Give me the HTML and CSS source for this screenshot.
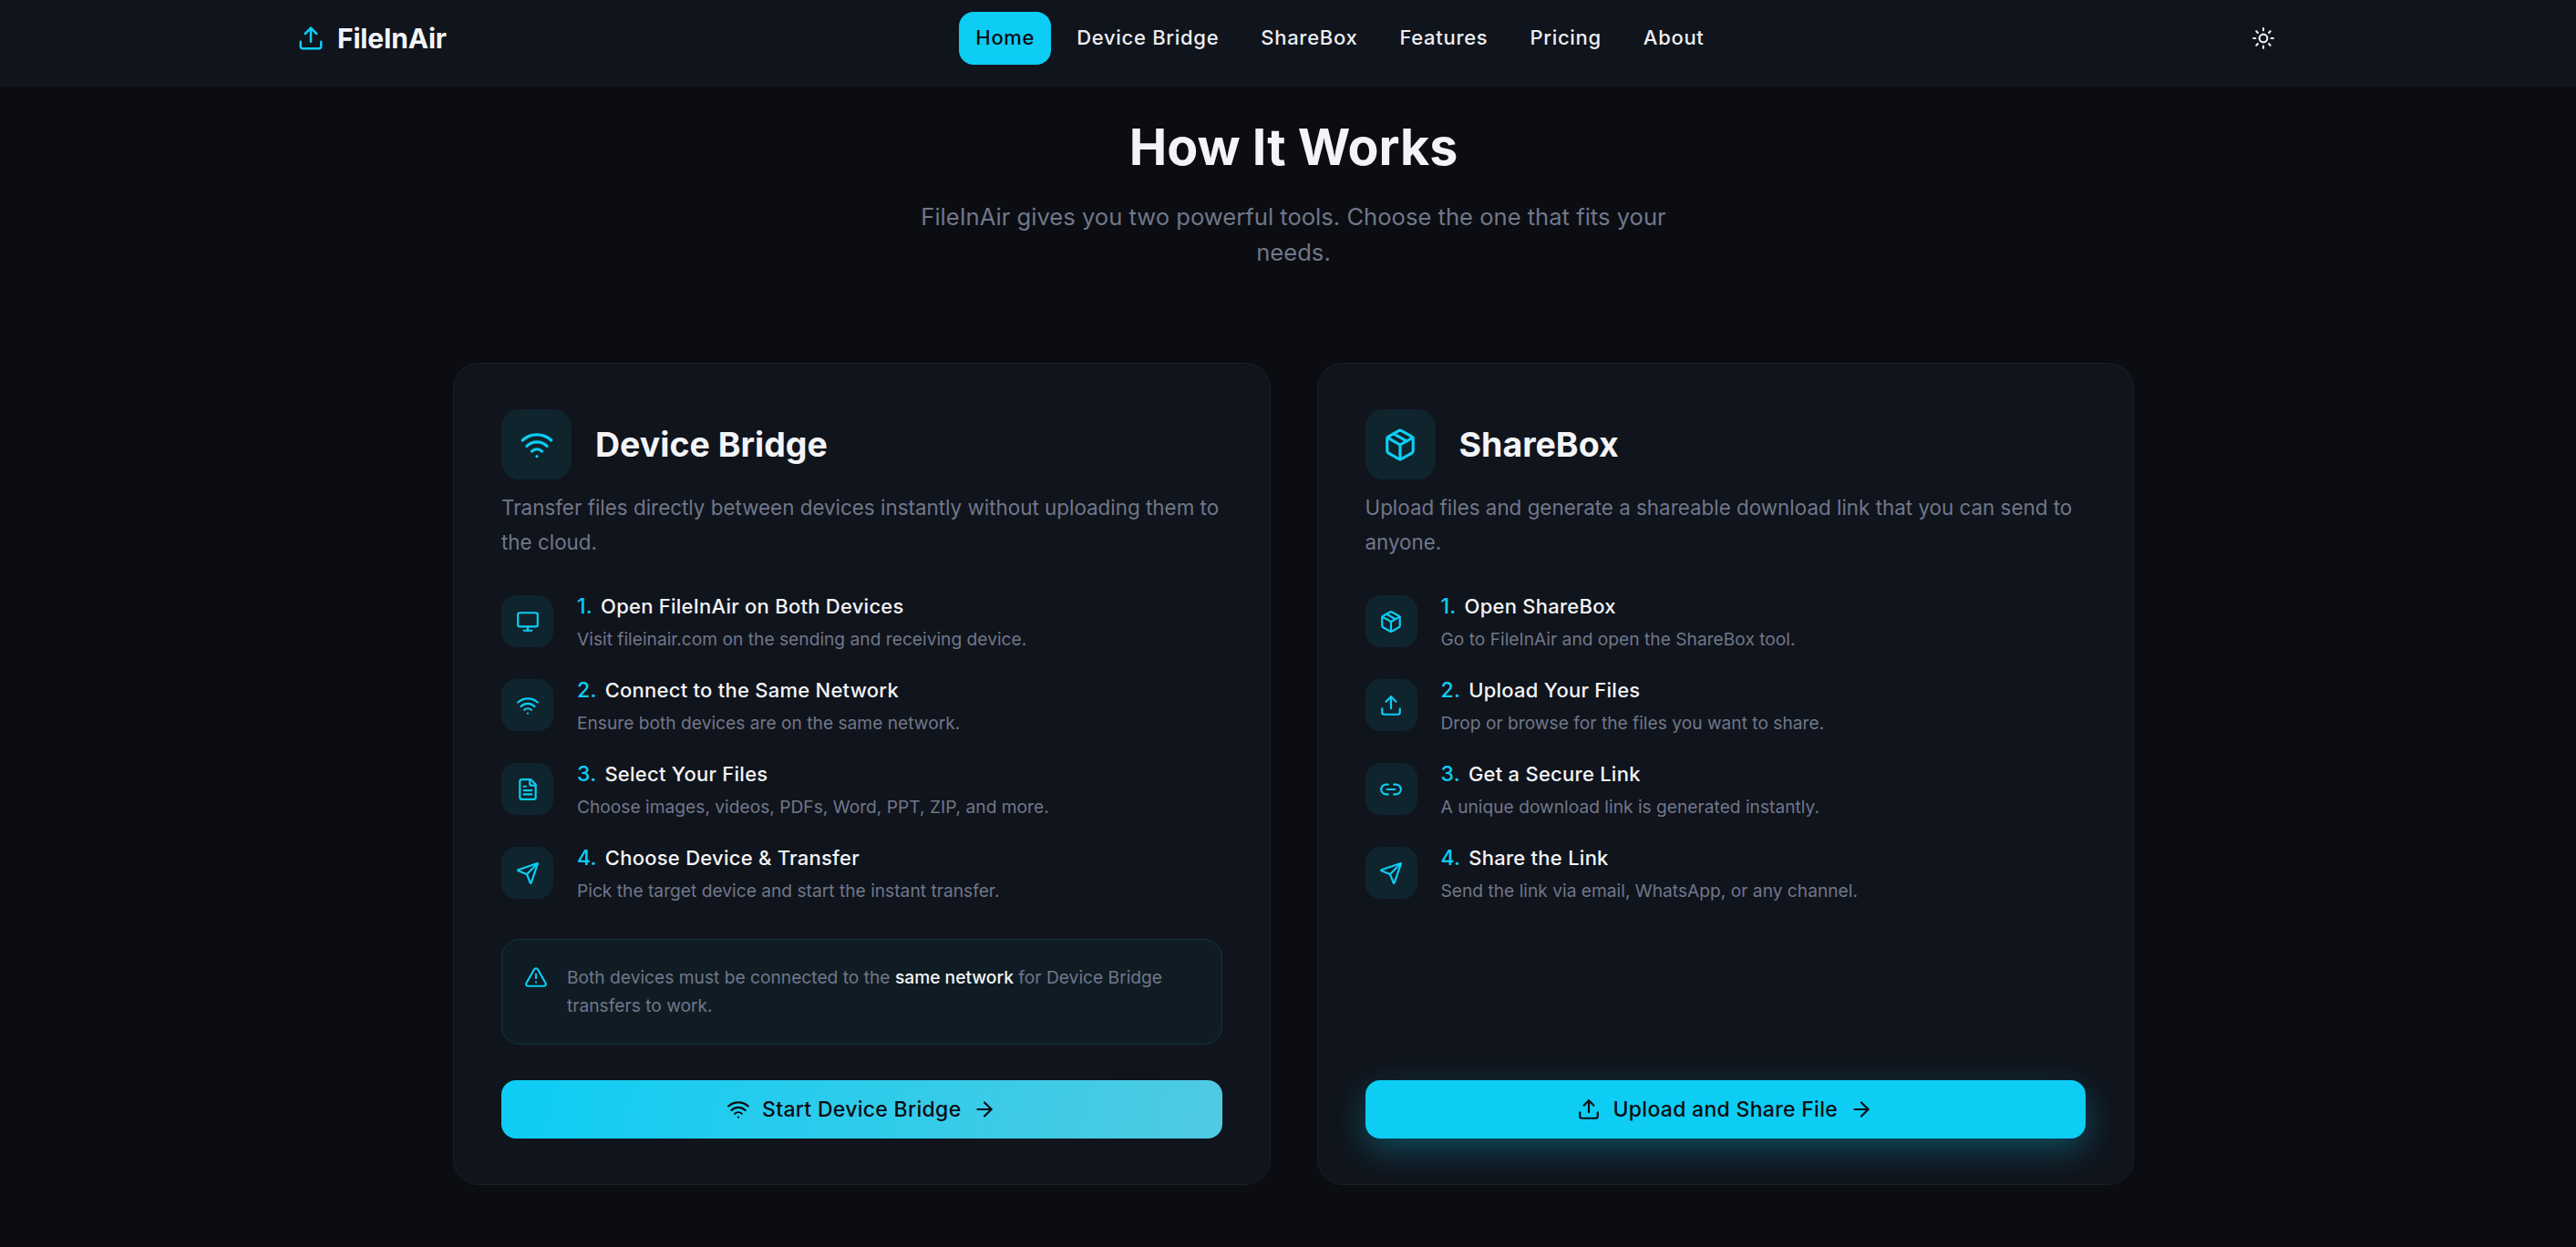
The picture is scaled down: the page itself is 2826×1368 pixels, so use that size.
FILE: index.html
```html
<!DOCTYPE html>
<html>
<head>
  <title>FileInAir - How It Works</title>
  <link rel="stylesheet" href="styles.css">
</head>
<body>
  <svg class="sprite" width="0" height="0">
    <symbol id="i-upload" viewBox="0 0 24 24"><path d="M21 15v4a2 2 0 0 1-2 2H5a2 2 0 0 1-2-2v-4"/><path d="M17 8l-5-5-5 5"/><path d="M12 3v12"/></symbol>
    <symbol id="i-sun" viewBox="0 0 24 24"><circle cx="12" cy="12" r="4"/><path d="M12 2v2M12 20v2M4.93 4.93l1.41 1.41M17.66 17.66l1.41 1.41M2 12h2M20 12h2M6.34 17.66l-1.41 1.41M19.07 4.93l-1.41 1.41"/></symbol>
    <symbol id="i-wifi" viewBox="0 0 24 24"><path d="M12 20h.01"/><path d="M2 8.82a15 15 0 0 1 20 0"/><path d="M5 12.859a10 10 0 0 1 14 0"/><path d="M8.5 16.429a5 5 0 0 1 7 0"/></symbol>
    <symbol id="i-box" viewBox="0 0 24 24"><path d="M11 21.73a2 2 0 0 0 2 0l7-4A2 2 0 0 0 21 16V8a2 2 0 0 0-1-1.73l-7-4a2 2 0 0 0-2 0l-7 4A2 2 0 0 0 3 8v8a2 2 0 0 0 1 1.73z"/><path d="M12 22V12"/><path d="M3.29 7L12 12l8.71-5"/><path d="M7.5 4.27l9 5.15"/></symbol>
    <symbol id="i-monitor" viewBox="0 0 24 24"><rect x="2" y="3" width="20" height="14" rx="2"/><path d="M8 21h8"/><path d="M12 17v4"/></symbol>
    <symbol id="i-file" viewBox="0 0 24 24"><path d="M15 2H6a2 2 0 0 0-2 2v16a2 2 0 0 0 2 2h12a2 2 0 0 0 2-2V7Z"/><path d="M14 2v4a2 2 0 0 0 2 2h4"/><path d="M10 9H8"/><path d="M16 13H8"/><path d="M16 17H8"/></symbol>
    <symbol id="i-send" viewBox="0 0 24 24"><path d="M14.536 21.686a.5.5 0 0 0 .937-.024l6.5-19a.496.496 0 0 0-.635-.635l-19 6.5a.5.5 0 0 0-.024.937l7.93 3.18a2 2 0 0 1 1.112 1.11z"/><path d="M21.854 2.147l-10.94 10.939"/></symbol>
    <symbol id="i-link" viewBox="0 0 24 24"><path d="M9 17H7A5 5 0 0 1 7 7h2"/><path d="M15 7h2a5 5 0 1 1 0 10h-2"/><path d="M8 12h8"/></symbol>
    <symbol id="i-alert" viewBox="0 0 24 24"><path d="m21.73 18-8-14a2 2 0 0 0-3.48 0l-8 14A2 2 0 0 0 4 21h16a2 2 0 0 0 1.73-3"/><path d="M12 9v4"/><path d="M12 17h.01"/></symbol>
    <symbol id="i-arrow" viewBox="0 0 24 24"><path d="M5 12h14"/><path d="m12 5 7 7-7 7"/></symbol>
  </svg>

  <nav class="navbar">
    <a class="logo"><svg class="icon logo-icon"><use href="#i-upload"/></svg>FileInAir</a>
    <div class="nav-links">
      <a class="nav-link active">Home</a>
      <a class="nav-link">Device Bridge</a>
      <a class="nav-link">ShareBox</a>
      <a class="nav-link">Features</a>
      <a class="nav-link">Pricing</a>
      <a class="nav-link">About</a>
    </div>
    <svg class="icon theme-icon"><use href="#i-sun"/></svg>
  </nav>

  <main class="how">
    <h1>How It Works</h1>
    <p class="lead">FileInAir gives you two powerful tools. Choose the one that fits your needs.</p>

    <div class="cards">
      <section class="card">
        <div class="card-head">
          <span class="tile tile-big"><svg class="icon"><use href="#i-wifi"/></svg></span>
          <h2>Device Bridge</h2>
        </div>
        <p class="card-desc">Transfer files directly between devices instantly without uploading them to the cloud.</p>
        <ul class="steps">
          <li class="step">
            <span class="tile"><svg class="icon"><use href="#i-monitor"/></svg></span>
            <div><h3><b>1.</b>Open FileInAir on Both Devices</h3><p>Visit fileinair.com on the sending and receiving device.</p></div>
          </li>
          <li class="step">
            <span class="tile"><svg class="icon"><use href="#i-wifi"/></svg></span>
            <div><h3><b>2.</b>Connect to the Same Network</h3><p>Ensure both devices are on the same network.</p></div>
          </li>
          <li class="step">
            <span class="tile"><svg class="icon"><use href="#i-file"/></svg></span>
            <div><h3><b>3.</b>Select Your Files</h3><p>Choose images, videos, PDFs, Word, PPT, ZIP, and more.</p></div>
          </li>
          <li class="step">
            <span class="tile"><svg class="icon"><use href="#i-send"/></svg></span>
            <div><h3><b>4.</b>Choose Device &amp; Transfer</h3><p>Pick the target device and start the instant transfer.</p></div>
          </li>
        </ul>
        <div class="note">
          <svg class="icon"><use href="#i-alert"/></svg>
          <p>Both devices must be connected to the <strong>same network</strong> for Device Bridge transfers to work.</p>
        </div>
        <a class="btn btn-fade"><svg class="icon"><use href="#i-wifi"/></svg>Start Device Bridge<svg class="icon"><use href="#i-arrow"/></svg></a>
      </section>

      <section class="card">
        <div class="card-head">
          <span class="tile tile-big"><svg class="icon"><use href="#i-box"/></svg></span>
          <h2>ShareBox</h2>
        </div>
        <p class="card-desc">Upload files and generate a shareable download link that you can send to anyone.</p>
        <ul class="steps">
          <li class="step">
            <span class="tile"><svg class="icon"><use href="#i-box"/></svg></span>
            <div><h3><b>1.</b>Open ShareBox</h3><p>Go to FileInAir and open the ShareBox tool.</p></div>
          </li>
          <li class="step">
            <span class="tile"><svg class="icon"><use href="#i-upload"/></svg></span>
            <div><h3><b>2.</b>Upload Your Files</h3><p>Drop or browse for the files you want to share.</p></div>
          </li>
          <li class="step">
            <span class="tile"><svg class="icon"><use href="#i-link"/></svg></span>
            <div><h3><b>3.</b>Get a Secure Link</h3><p>A unique download link is generated instantly.</p></div>
          </li>
          <li class="step">
            <span class="tile"><svg class="icon"><use href="#i-send"/></svg></span>
            <div><h3><b>4.</b>Share the Link</h3><p>Send the link via email, WhatsApp, or any channel.</p></div>
          </li>
        </ul>
        <a class="btn btn-glow"><svg class="icon"><use href="#i-upload"/></svg>Upload and Share File<svg class="icon"><use href="#i-arrow"/></svg></a>
      </section>
    </div>
  </main>
</body>
</html>
```

FILE: styles.css
```css
* {
  box-sizing: border-box;
}
html, body {
  height: 100%;
}
body {
  margin: 0;
  background: #0b0d12;
  color: #f3f4f7;
  font-family: Inter, "Liberation Sans", sans-serif;
  overflow: hidden;
}
h1, h2, h3, p, ul {
  margin: 0;
  padding: 0;
}
ul {
  list-style: none;
}
.sprite {
  position: absolute;
}
.icon {
  width: 26px;
  height: 26px;
  flex: none;
  fill: none;
  stroke: currentColor;
  stroke-width: 2;
  stroke-linecap: round;
  stroke-linejoin: round;
}

/* navbar */
.navbar {
  height: 94px;
  padding: 0 330px 10px 326px;
  background: #10141c;
  border-bottom: 1px solid #1b1f26;
  display: flex;
  align-items: center;
  justify-content: space-between;
}
.logo {
  display: flex;
  align-items: center;
  gap: 14px;
  font-size: 30px;
  font-weight: 700;
  letter-spacing: -0.2px;
}
.logo-icon {
  width: 30px;
  height: 30px;
  color: #0dcdf4;
}
.nav-links {
  display: flex;
  gap: 10px;
  margin-left: -20px;
}
.nav-link {
  padding: 0 18px;
  height: 58px;
  line-height: 56px;
  font-size: 22px;
  font-weight: 500;
  letter-spacing: 0.7px;
  color: #eceef2;
  border-radius: 16px;
}
.nav-link.active {
  background: #0dcdf4;
  color: #0b0d12;
}
.theme-icon {
  color: #eceef2;
}

/* heading */
.how {
  padding: 29px 0 0 12px;
  text-align: center;
}
h1 {
  font-size: 55.5px;
  line-height: 76px;
  font-weight: 700;
}
.lead {
  width: 860px;
  margin: 19px auto 0;
  font-size: 25.6px;
  line-height: 39px;
  color: #70778a;
}

/* cards */
.cards {
  width: 1844px;
  margin: 102px auto 0;
  display: grid;
  grid-template-columns: 1fr 1fr;
  gap: 51px;
  text-align: left;
}
.card {
  height: 902px;
  padding: 50px 52px;
  background: #10141c;
  border: 1px solid #1b1f26;
  border-radius: 28px;
  display: flex;
  flex-direction: column;
}
.card-head {
  display: flex;
  align-items: center;
  gap: 26px;
}
h2 {
  font-size: 37.5px;
  font-weight: 700;
  color: #f3f4f7;
}
.card-desc {
  margin-top: 12px;
  font-size: 22.4px;
  line-height: 38px;
  color: #70778a;
}
.tile {
  width: 57px;
  height: 57px;
  flex: none;
  display: flex;
  align-items: center;
  justify-content: center;
  background: #0f242d;
  color: #0dcdf4;
  border-radius: 16px;
}
.tile-big {
  width: 77px;
  height: 77px;
  border-radius: 20px;
}
.tile-big .icon {
  width: 38px;
  height: 38px;
}

/* steps */
.steps {
  margin-top: 39px;
  display: flex;
  flex-direction: column;
  gap: 32px;
}
.step {
  display: flex;
  gap: 26px;
}
h3 {
  font-size: 22px;
  line-height: 24px;
  font-weight: 500;
  letter-spacing: 0.25px;
  color: #f3f4f7;
}
h3 b {
  color: #0dcdf4;
  font-size: 23px;
  font-weight: 500;
  margin-right: 9px;
}
.step p {
  margin-top: 12px;
  font-size: 19.2px;
  line-height: 24px;
  color: #70778a;
}

/* note */
.note {
  margin-top: 41px;
  height: 116px;
  padding: 26px 24px 0;
  background: #101c24;
  border: 1px solid #123642;
  border-radius: 20px;
  display: flex;
  gap: 21px;
  color: #0dcdf4;
}
.note .icon {
  margin-top: 2px;
}
.note p {
  font-size: 19.2px;
  line-height: 31px;
  color: #70778a;
}
.note strong {
  font-weight: 500;
  color: #f3f4f7;
}

/* buttons */
.btn {
  margin-top: auto;
  height: 64px;
  border-radius: 16px;
  display: flex;
  align-items: center;
  justify-content: center;
  gap: 13px;
  font-size: 23px;
  font-weight: 500;
  letter-spacing: 0.3px;
  color: #0b0d12;
}
.btn-fade {
  background: linear-gradient(100deg, #0dcdf4, #50cae2);
}
.btn-glow {
  background: #0dcdf4;
  box-shadow: 0 12px 36px rgba(13, 205, 244, 0.3);
}
```
